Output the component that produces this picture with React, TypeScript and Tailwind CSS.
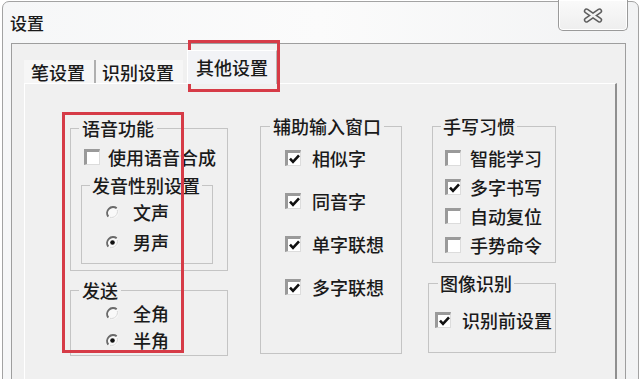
import React from "react";

const Check = ({ checked }: { checked?: boolean }) => (
  <span className="w-[16px] h-[16px] shrink-0 bg-white border-t-[3px] border-l-[3px] border-t-[#9a9a9a] border-l-[#9a9a9a] border-r border-b border-r-[#dcdcdc] border-b-[#dcdcdc] flex items-center justify-center">
    {checked && (
      <svg width="11" height="10" viewBox="0 0 11 10">
        <path d="M1 4.6 L4 7.8 L10 1.3" stroke="#111" strokeWidth="2.6" fill="none" />
      </svg>
    )}
  </span>
);

const Radio = ({ checked }: { checked?: boolean }) => (
  <svg width="15" height="15" viewBox="0 0 15 15" className="shrink-0">
    <circle cx="7.5" cy="7.5" r="6" fill="#f9f9f9" />
    <path d="M3.3 11.7 A6 6 0 0 1 11.7 3.3" stroke="#6a6a6a" strokeWidth="2" fill="none" />
    <path d="M12.3 5 A6 6 0 0 1 5 12.3" stroke="#d8d8d8" strokeWidth="1" fill="none" />
    {checked && <circle cx="7.5" cy="7.5" r="2.3" fill="#111" />}
  </svg>
);

const CheckRow = ({ label, checked, gap }: { label: string; checked?: boolean; gap: string }) => (
  <div className={`flex items-center h-[20px] leading-[20px] ${gap}`}>
    <Check checked={checked} />
    <span>{label}</span>
  </div>
);

const RadioRow = ({ label, checked }: { label: string; checked?: boolean }) => (
  <div className="flex items-center h-[20px] leading-[20px] gap-[13px]">
    <Radio checked={checked} />
    <span>{label}</span>
  </div>
);

export default function App() {
  return (
    <div className="w-[642px] h-[379px] overflow-hidden bg-white relative text-[18px] font-medium text-[#1a1a1a] font-['Noto_Sans_CJK_SC','Noto_Sans',sans-serif]">
      <div className="ml-[2px] mt-[1px] w-[637px] h-[420px] border border-[#a3a3a3] rounded-t-[7px] bg-gradient-to-r from-[#f6f7f8] via-[#fbfbfb] to-[#f2f3f4] flex flex-col">
        {/* title bar */}
        <div className="h-[41px] flex items-start justify-between">
          <span className="pl-[7px] pt-[10px] leading-[22px] text-[17px]">设置</span>
          <div className="-mt-[2px] mr-[10px] w-[70px] h-[31px] border border-[#9a9a9a] border-t-0 rounded-b-[5px] bg-gradient-to-b from-[#fafafa] to-[#eeeeee] flex items-center justify-center shadow-[inset_0_0_0_1px_#ffffff]">
            <svg width="20" height="15" viewBox="0 0 20 15">
              <path d="M3.5 3 L16.5 12 M16.5 3 L3.5 12" stroke="#5e5e5e" strokeWidth="5.4" strokeLinecap="round" fill="none" />
              <path d="M3.5 3 L16.5 12 M16.5 3 L3.5 12" stroke="#f2f2f2" strokeWidth="2.4" strokeLinecap="round" fill="none" />
            </svg>
          </div>
        </div>
        {/* client area */}
        <div className="ml-[8px] w-[615px] flex-1 bg-[#f0f0f0] border-l border-t border-r border-[#9e9e9e] flex flex-col">
          {/* tabs */}
          <div className="h-[39px] flex items-end pl-[12px] leading-[22px]">
            <div className="w-[72px] h-[23px] pl-[7px] pt-[1px] bg-[#f6f6f6] border-r-2 border-r-[#b0b0b0]">
              笔设置
            </div>
            <div className="w-[87px] h-[23px] pl-[6px] pt-[1px] bg-[#f6f6f6]">
              识别设置
            </div>
            <div className="ml-[4px] w-[90px] h-[34px] -mb-px relative z-10 pl-[8px] pt-[5px] bg-[#f2f3f6] border-t border-l border-white border-r border-r-[#b8b8b8]">
              其他设置
            </div>
          </div>
          {/* tab panel */}
          <div className="ml-[12px] w-[593px] flex-1 border-t border-l border-white border-r-2 border-r-[#8f8f8f] flex items-start pl-[45px] pt-[32px]">
            {/* col 1 */}
            <div className="w-[158px] mt-[2px] flex flex-col">
              <fieldset className="h-[153px] border border-[#c4c4c4]">
                <legend className="ml-[8px] px-[3px] leading-[20px]">语音功能</legend>
                <div className="pl-[10px] pt-[9px] flex flex-col">
                  <div className="pl-[3px]">
                    <CheckRow label="使用语音合成" gap="gap-[8px]" />
                  </div>
                  <fieldset className="mt-[8px] w-[132px] h-[89px] border border-[#c4c4c4]">
                    <legend className="ml-[8px] px-[2px] leading-[20px]">发音性别设置</legend>
                    <div className="pl-[23px] pt-[7px] flex flex-col gap-[10px]">
                      <RadioRow label="文声" />
                      <RadioRow label="男声" checked />
                    </div>
                  </fieldset>
                </div>
              </fieldset>
              <fieldset className="mt-[9px] h-[76px] border border-[#c4c4c4]">
                <legend className="ml-[8px] px-[3px] leading-[20px]">发送</legend>
                <div className="pl-[34px] pt-[3px] flex flex-col gap-[7px]">
                  <RadioRow label="全角" />
                  <RadioRow label="半角" checked />
                </div>
              </fieldset>
            </div>
            {/* col 2 */}
            <div className="ml-[32px] w-[142px]">
              <fieldset className="h-[238px] border border-[#c4c4c4]">
                <legend className="ml-[9px] px-[3px] leading-[20px]">辅助输入窗口</legend>
                <div className="pl-[24px] pt-[12px] flex flex-col gap-[23px]">
                  <CheckRow label="相似字" checked gap="gap-[11px]" />
                  <CheckRow label="同音字" checked gap="gap-[11px]" />
                  <CheckRow label="单字联想" checked gap="gap-[11px]" />
                  <CheckRow label="多字联想" checked gap="gap-[11px]" />
                </div>
              </fieldset>
            </div>
            {/* col 3 */}
            <div className="ml-[26px] w-[128px] flex flex-col">
              <fieldset className="ml-[4px] h-[147px] border border-[#c4c4c4]">
                <legend className="ml-[8px] px-[2px] leading-[20px]">手写习惯</legend>
                <div className="pl-[12px] pt-[12px] flex flex-col gap-[9px]">
                  <CheckRow label="智能学习" gap="gap-[9px]" />
                  <CheckRow label="多字书写" checked gap="gap-[9px]" />
                  <CheckRow label="自动复位" gap="gap-[9px]" />
                  <CheckRow label="手势命令" gap="gap-[9px]" />
                </div>
              </fieldset>
              <fieldset className="mt-[10px] h-[80px] border border-[#c4c4c4]">
                <legend className="ml-[9px] px-[2px] leading-[20px]">图像识别</legend>
                <div className="pl-[6px] pt-[17px]">
                  <CheckRow label="识别前设置" checked gap="gap-[11px]" />
                </div>
              </fieldset>
            </div>
          </div>
        </div>
      </div>
      {/* red annotation boxes */}
      <div className="absolute left-[188px] top-[40px] w-[92px] h-[52px] border-[3px] border-[#d63b47]" />
      <div className="absolute left-[62px] top-[112px] w-[122px] h-[241px] border-[3px] border-[#d63b47]" />
    </div>
  );
}
